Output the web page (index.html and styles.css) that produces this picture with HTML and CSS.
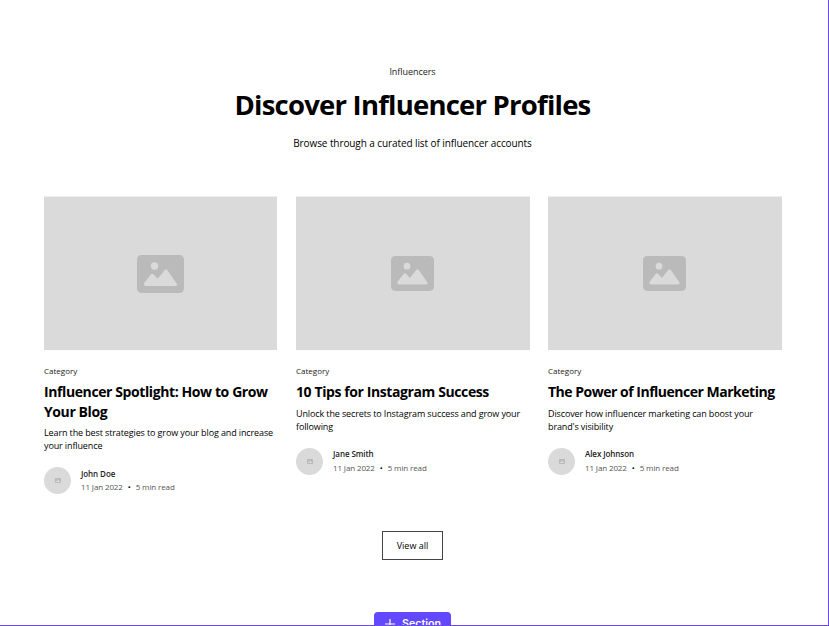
FILE: index.html
```html
<!DOCTYPE html>
<html lang="en">
<head>
<meta charset="utf-8">
<title>Influencer Profiles</title>
<link rel="stylesheet" href="styles.css">
</head>
<body>
<svg class="defs" width="0" height="0">
  <symbol id="image" viewBox="0 0 47 38">
    <path fill="#bababa" fill-rule="evenodd" d="M5 0H42Q47 0 47 5V33Q47 38 42 38H5Q0 38 0 33V5Q0 0 5 0ZM17.5 7.3A3.7 3.7 0 1 0 17.5 14.700A3.7 3.7 0 1 0 17.5 7.300ZM7 29.500Q7 31 8.500 31H38.500Q40.500 31 40 29L30.200 15Q29 13.600 27.800 15L20.600 23.800L16.500 19.300Q15.200 18 14 19.300L7.500 27.500Q7 28.200 7 29.500Z"/>
  </symbol>
</svg>
<main class="section">
  <header class="intro">
    <p class="tagline">Influencers</p>
    <h1>Discover Influencer Profiles</h1>
    <p class="lead">Browse through a curated list of influencer accounts</p>
  </header>
  <div class="cards">
    <article class="card">
      <div class="thumb first"><svg class="thumb-icon large"><use href="#image"/></svg></div>
      <p class="category">Category</p>
      <h2>Influencer Spotlight: How to Grow<br>Your Blog</h2>
      <p class="desc">Learn the best strategies to grow your blog and increase<br>your influence</p>
      <div class="author">
        <div class="avatar"><svg class="avatar-icon"><use href="#image"/></svg></div>
        <div class="meta"><p class="name">John Doe</p><p class="date"><span>11 Jan 2022</span><i>•</i><span>5 min read</span></p></div>
      </div>
    </article>
    <article class="card short">
      <div class="thumb"><svg class="thumb-icon"><use href="#image"/></svg></div>
      <p class="category">Category</p>
      <h2>10 Tips for Instagram Success</h2>
      <p class="desc">Unlock the secrets to Instagram success and grow your<br>following</p>
      <div class="author">
        <div class="avatar"><svg class="avatar-icon"><use href="#image"/></svg></div>
        <div class="meta"><p class="name">Jane Smith</p><p class="date"><span>11 Jan 2022</span><i>•</i><span>5 min read</span></p></div>
      </div>
    </article>
    <article class="card short">
      <div class="thumb"><svg class="thumb-icon"><use href="#image"/></svg></div>
      <p class="category">Category</p>
      <h2 class="tight">The Power of Influencer Marketing</h2>
      <p class="desc">Discover how influencer marketing can boost your<br>brand's visibility</p>
      <div class="author">
        <div class="avatar"><svg class="avatar-icon"><use href="#image"/></svg></div>
        <div class="meta"><p class="name">Alex Johnson</p><p class="date"><span>11 Jan 2022</span><i>•</i><span>5 min read</span></p></div>
      </div>
    </article>
  </div>
  <a class="view-all">View all</a>
  <div class="add-section"><svg class="plus" viewBox="0 0 10 10"><path d="M5 0V10M0 5H10" stroke="#fff" stroke-width="1.2"/></svg><span>Section</span></div>
</main>
</body>
</html>
```
FILE: styles.css
```css
* { box-sizing: border-box; }
body { margin: 0; background: #fff; color: #000; font-family: "Open Sans", "Noto Sans", sans-serif; }
p, h1, h2 { margin: 0; }
.defs { display: block; }
.section {
  width: 829px; height: 626px; padding: 65px 47px 0 44px;
  border-right: 1px solid #6a4be8; border-bottom: 1px solid #6a4be8;
  display: flex; flex-direction: column; overflow: hidden;
}
.section > * { flex: none; }
.intro { text-align: center; height: 132px; white-space: nowrap; }
.tagline { font-size: 9px; line-height: 14px; color: #222; letter-spacing: -0.05px; }
h1 { font-size: 27.5px; line-height: 34px; margin-top: 9px; font-weight: 700; letter-spacing: -0.78px; }
.lead { font-size: 10px; line-height: 14px; margin-top: 14px; letter-spacing: -0.09px; }
.cards { display: grid; grid-template-columns: 252px 252px 234px; height: 334px; white-space: nowrap; }
.thumb { width: 234px; height: 153px; padding-right: 2px; background: #dadada; box-shadow: 0 -1px 0 #eee; display: flex; align-items: center; justify-content: center; }
.thumb.first { width: 233px; padding: 0; }
.thumb-icon { width: 43px; height: 35px; }
.thumb-icon.large { width: 47px; height: 38px; }
.category { font-size: 8px; line-height: 12px; margin-top: 15px; font-weight: 500; color: #222; }
h2 { font-size: 14px; line-height: 20px; margin-top: 5px; font-weight: 700; letter-spacing: -0.4px; }
.tight { letter-spacing: -0.49px; }
.desc { font-size: 9px; line-height: 13px; margin-top: 4px; letter-spacing: -0.12px; }
.author { display: flex; gap: 10px; margin-top: 15px; align-items: flex-start; }
.avatar { width: 27px; height: 27px; border-radius: 50%; background: #dadada; display: flex; align-items: center; justify-content: center; }
.avatar-icon { width: 6px; height: 5px; }
.name { font-size: 8px; line-height: 13px; font-weight: 600; color: #222; letter-spacing: -0.08px; }
.date { font-size: 8px; line-height: 13px; color: #555; display: flex; gap: 5px; letter-spacing: -0.12px; }
.date i { font-style: normal; color: #000; }
.short .desc { margin-top: 5px; }
.short .meta { margin-top: -1px; }
.short .date { margin-top: 1px; }
.view-all { align-self: center; width: 61px; height: 29px; margin-bottom: 1px; border: 1px solid #444; display: flex; align-items: center; justify-content: center; font-size: 9px; line-height: 13px; padding-bottom: 1px; }
.add-section {
  align-self: center; width: 77px; height: 24px; margin-top: 51px; padding-left: 1px; border-radius: 4px 4px 0 0;
  background: #6248ff; color: #fff; display: flex; align-items: center; justify-content: center; gap: 7px;
  font: 600 10.7px/24px Inter, sans-serif;
}
.plus { width: 10px; height: 10px; }
```
